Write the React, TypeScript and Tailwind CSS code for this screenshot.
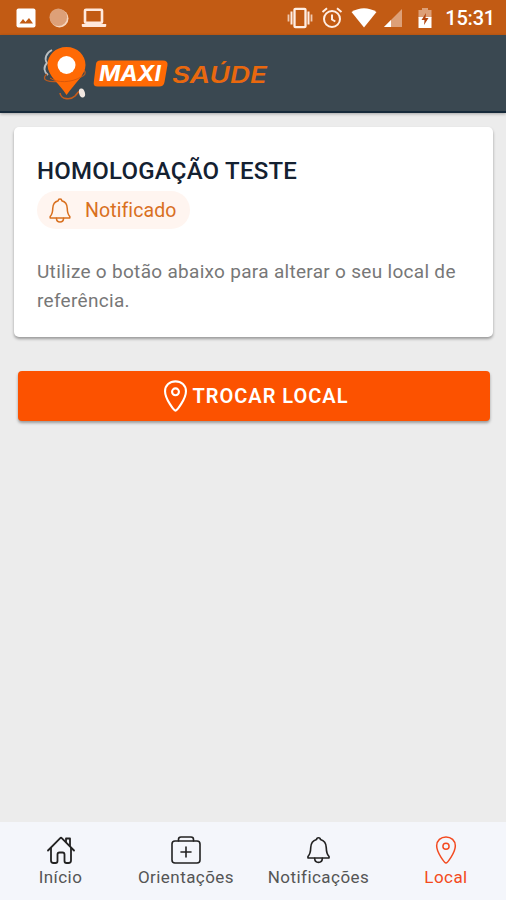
import type { ReactNode } from "react";

function PinIcon({ className, strokeWidth = 1.6 }: { className?: string; strokeWidth?: number }) {
  return (
    <svg viewBox="0 0 22 30" fill="none" stroke="currentColor" strokeWidth={strokeWidth} strokeLinejoin="round" className={className}>
      <path d="M11 29C9.800 29 1 18 1 10.500C1 4.800 5.500 1 11 1s10 3.800 10 9.500C21 18 12.200 29 11 29Z" />
      <circle cx="11" cy="11" r="3.300" />
    </svg>
  );
}

function BellIcon({ className }: { className?: string }) {
  return (
    <svg viewBox="0 0 24 28" fill="none" stroke="currentColor" strokeWidth="1.700" strokeLinejoin="round" strokeLinecap="round" className={className}>
      <path d="M10 3C10 .6 14 .6 14 3C18.500 4.200 20 8 20.100 11.500C20.200 16.500 20.800 18.500 23 20.800V22.300H1V20.800C3.200 18.500 3.800 16.500 3.900 11.500C4 8 5.500 4.200 10 3Z" />
      <path d="M8 22.800C8.300 28.200 15.700 28.200 16 22.800" />
    </svg>
  );
}

function HomeIcon() {
  return (
    <svg viewBox="0 0 28 28" fill="none" stroke="currentColor" strokeWidth="1.800" strokeLinejoin="round" strokeLinecap="round" className="h-7 w-7">
      <path d="M1 14.500 13 2.300Q14 1.300 15 2.300L27 14.500" />
      <path d="M4 12V24.500Q4 27 6.500 27H8.500Q10.500 27 10.500 25V18.500Q10.500 16.500 12.500 16.500H15.500Q17.500 16.500 17.500 18.500V25Q17.500 27 19.500 27H21.500Q24 27 24 24.500V12" />
      <path d="M19 5.500V2.500H23V9.500" />
    </svg>
  );
}

function MedkitIcon() {
  return (
    <svg viewBox="0 0 30 28" fill="none" stroke="currentColor" strokeWidth="1.600" strokeLinejoin="round" strokeLinecap="round" className="h-7 w-[30px]">
      <rect x="1" y="5" width="28" height="22" rx="3" />
      <path d="M7.500 5V3.500Q7.500 1 10 1H20Q22.500 1 22.500 3.500V5M15 11V21M10 16H20" />
    </svg>
  );
}

function StatusBar() {
  return (
    <div className="flex h-[35px] shrink-0 items-center bg-[#c25b14] pl-4 pr-[11px] text-white">
      <svg viewBox="0 0 20 20" className="h-5 w-5">
        <rect x=".5" y=".5" width="19" height="19" rx="2" fill="currentColor" />
        <path d="M3.500 15.500 7 11l2.500 3 3.500-4 4 5.500Z" fill="#c25b14" />
      </svg>
      <svg viewBox="0 0 20 20" className="ml-[13px] h-5 w-5">
        <circle cx="10.500" cy="10.500" r="9" fill="#f6d5bd" />
        <circle cx="9.300" cy="9.300" r="8.800" fill="#dda078" />
      </svg>
      <svg viewBox="0 0 26 20" className="ml-3 h-5 w-[26px] text-[#ffe9dd]">
        <rect x="4" y="1.800" width="17" height="13" rx="1" fill="none" stroke="currentColor" strokeWidth="2.600" />
        <path d="M.8 16H25.200V18Q25.200 19 24 19H2Q.8 19 .8 18Z" fill="currentColor" />
      </svg>

      <svg viewBox="0 0 26 22" fill="none" stroke="currentColor" className="ml-auto h-[22px] w-[26px] text-[#ffeee4]">
        <rect x="7.500" y="1.800" width="11" height="18.400" rx="1" strokeWidth="2.300" />
        <path d="M4.500 4.500V17.500M21.500 4.500V17.500" strokeWidth="2" />
        <path d="M1.500 7.500V14.500M24.500 7.500V14.500" strokeWidth="1.800" opacity=".75" />
      </svg>
      <svg viewBox="0 0 22 22" fill="none" stroke="currentColor" strokeWidth="2" className="ml-[8px] h-[22px] w-[22px] text-[#ffeee4]">
        <circle cx="11" cy="12" r="8" />
        <path d="M11 7.500V12.500L14.300 14.500M1.500 5 6 1.300M20.500 5 16 1.300" />
      </svg>
      <svg viewBox="0 0 26 20" className="ml-[8px] h-5 w-[26px]">
        <path d="M.5 4Q13-3.500 25.500 4L13 19.500Z" fill="currentColor" />
      </svg>
      <svg viewBox="0 0 18 18" className="ml-[7px] h-[18px] w-[18px]">
        <path d="M0 18 18 0V18Z" fill="#dda078" />
        <path d="M0 18 7 11V18Z" fill="currentColor" />
      </svg>
      <svg viewBox="0 0 14 22" className="ml-4 mr-[13px] h-[22px] w-3.5">
        <path d="M4 1H10V3H13.500V11H.5V3H4Z" fill="#dda078" />
        <path d="M.5 10H13.500V21H.5Z" fill="currentColor" />
        <path d="M8 6 3.500 13H6.500L6 18 10.500 11H7.500Z" fill="#b24610" />
      </svg>
      <span className="text-[20px] font-medium leading-none tracking-[-0.200px]">15:31</span>
    </div>
  );
}

function Logo() {
  return (
    <svg viewBox="0 0 230 56" className="h-14 w-[230px]">
      <path d="M10 3C4 6 2 12 5 16C1 20 2 25 6 28" fill="none" stroke="#b9bfc2" strokeWidth="1.800" />
      <path d="M5 27C-2 33 6 36 20 34C36 32 47 29 42 23" fill="none" stroke="#b65a21" strokeWidth="1.300" />
      <path d="M24.500 0C35.500 0 43.500 8 43.500 18C43.500 28 33 36 24.500 48C18 37 5.500 29 5.500 18C5.500 8 13.500 0 24.500 0Z" fill="#ff6a05" />
      <circle cx="24.500" cy="18" r="9" fill="#fff" />
      <path d="M8 31C15 36 29 36 39 30" fill="none" stroke="#d9580b" strokeWidth="1" />
      <path d="M18 46C19 53 29 53 33 49Q36 45 39 43" fill="none" stroke="#c65c1b" strokeWidth="1.600" />
      <ellipse cx="40" cy="46" rx="2.900" ry="4.600" fill="#f1e7e1" transform="rotate(-15 40 46)" />
      <path d="M58 13.500H121Q126 13.500 125.500 18L122.500 35Q121.800 39.500 117 39.500H55.500Q51 39.500 51.800 35L54 17Q54.500 13.500 58 13.500Z" fill="#ff6a05" />
      <text x="57" y="34" textLength="62" lengthAdjust="spacingAndGlyphs" fill="#fff" className="font-['Inter'] text-[21px] font-bold italic">MAXI</text>
      <text x="130" y="35.500" textLength="95" lengthAdjust="spacingAndGlyphs" fill="#e9680e" className="font-['Inter'] text-[22.500px] font-semibold italic">SAÚDE</text>
    </svg>
  );
}

function Tab({ icon, label, active, className }: { icon: ReactNode; label: string; active?: boolean; className: string }) {
  return (
    <a className={`flex flex-col items-center pt-[14px] ${active ? "text-[#f34a20]" : "text-[#222]"} ${className}`}>
      <span className="flex h-7 items-center">{icon}</span>
      <span className={`mt-px whitespace-nowrap text-[17px] leading-6 tracking-[0.450px] ${active ? "" : "text-[#555]"}`}>{label}</span>
    </a>
  );
}

export default function App() {
  return (
    <div className="flex h-screen flex-col bg-[#ececec] font-['Roboto',sans-serif]">
      <StatusBar />
      <header className="flex h-[78px] shrink-0 items-start border-b-2 border-[#172a3a] bg-[#3a4851] pl-[42px] pt-3 shadow-[0_1px_3px_rgba(0,0,0,0.3)]">
        <Logo />
      </header>

      <main className="flex-1">
        <section className="ml-[14px] mr-[13px] mt-[14px] h-[210px] rounded-[5px] bg-white px-[23px] pt-7 shadow-[0_2px_3px_rgba(0,0,0,0.350)]">
          <h1 className="whitespace-nowrap text-[24px] font-medium leading-8 tracking-[0.230px] text-[#142131]">HOMOLOGAÇÃO TESTE</h1>
          <div className="mt-1 flex h-[38px] w-[153px] items-center rounded-full bg-[#fff5f0] pl-3 text-[#d9701f]">
            <BellIcon className="h-[25px] w-[22px]" />
            <span className="ml-[14px] mt-0.5 text-[19.500px] leading-6 tracking-[0.080px]">Notificado</span>
          </div>
          <p className="mt-7 text-[19px] leading-[29px] tracking-[0.300px] text-[#777]">
            Utilize o botão abaixo para alterar o seu local de referência.
          </p>
        </section>

        <button className="ml-[18px] mt-[34px] flex h-[50px] w-[472px] items-center justify-center rounded-[4px] bg-[#fc5200] pl-1 text-white shadow-[0_2px_3px_rgba(0,0,0,0.350)]">
          <PinIcon className="h-8 w-[23px]" strokeWidth={2} />
          <span className="ml-[6px] text-[20px] font-semibold leading-6 tracking-[0.980px]">TROCAR LOCAL</span>
        </button>
      </main>

      <nav className="flex h-[78px] shrink-0 bg-[#f4f6fb]">
        <Tab className="w-[121px]" icon={<HomeIcon />} label="Início" />
        <Tab className="w-[130px]" icon={<MedkitIcon />} label="Orientações" />
        <Tab className="w-[135px]" icon={<BellIcon className="h-7 w-[23px]" />} label="Notificações" />
        <Tab className="w-[120px]" icon={<PinIcon className="h-7 w-[22px]" />} label="Local" active />
      </nav>
    </div>
  );
}
